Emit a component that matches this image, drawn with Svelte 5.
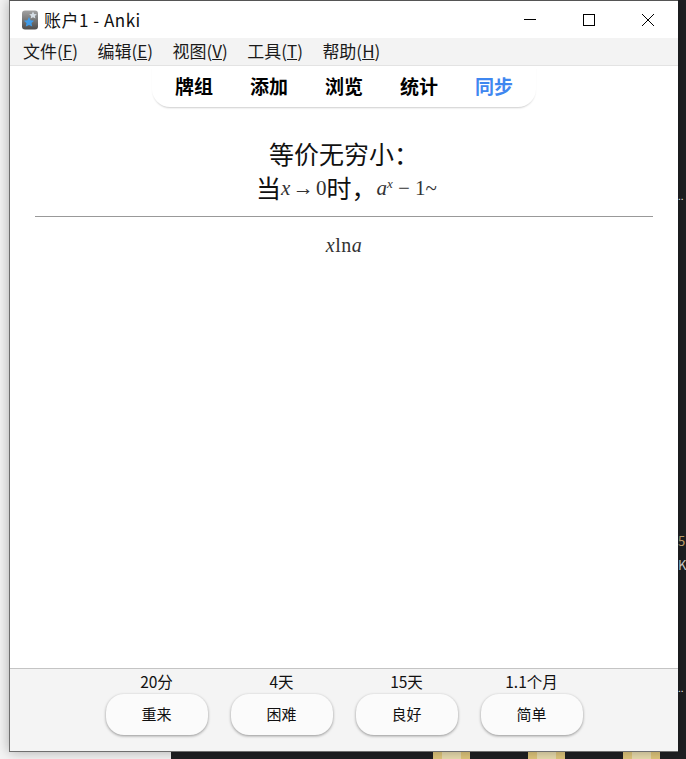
<script>
  const menus = [
    { label: '文件', key: 'F' },
    { label: '编辑', key: 'E' },
    { label: '视图', key: 'V' },
    { label: '工具', key: 'T' },
    { label: '帮助', key: 'H' }
  ];
  const tabs = ['牌组', '添加', '浏览', '统计', '同步'];
  const answers = [
    { time: '20分', label: '重来' },
    { time: '4天', label: '困难' },
    { time: '15天', label: '良好' },
    { time: '1.1个月', label: '简单' }
  ];
</script>

<div class="desktop">
  <div class="light"></div>

  <!-- bits of other windows peeking out on the right -->
  <span class="peek one">5</span>
  <span class="peek two">K</span>
  <span class="peek three">..</span>
  <span class="peek four">..</span>
  <div class="folders">
    <i></i><i></i><i></i>
  </div>

  <div class="window">
    <div class="titlebar">
      <svg class="app-icon" viewBox="0 0 16 20" width="16" height="20">
        <defs>
          <linearGradient id="icon-bg" x1="0" y1="0" x2="0" y2="1">
            <stop offset="0" stop-color="#a2a2a2" />
            <stop offset="1" stop-color="#4c4c4c" />
          </linearGradient>
        </defs>
        <rect x="0" y="0.5" width="16" height="19" rx="3" fill="url(#icon-bg)" />
        <path d="M11 1.500l1.200 2.400 2.600.3-1.900 1.800.5 2.600-2.400-1.300-2.300 1.300.4-2.600-1.900-1.800 2.600-.3z" fill="#d5dde4" />
        <path d="M7 7l1.600 3.300 3.500.4-2.600 2.400.7 3.500L7 14.900l-3.200 1.700.7-3.500-2.600-2.400 3.500-.4z" fill="#3f9be8" />
      </svg>
      <span class="title">账户1 - Anki</span>
      <div class="controls">
        <svg viewBox="0 0 12 12" width="12" height="12"><path d="M0 5.500h12" stroke="#000" fill="none" /></svg>
        <svg viewBox="0 0 12 12" width="12" height="12"><rect x="0.500" y="0.500" width="11" height="11" stroke="#000" fill="none" /></svg>
        <svg viewBox="0 0 12 12" width="12" height="12"><path d="M0 0l12 12M12 0L0 12" stroke="#000" fill="none" /></svg>
      </div>
    </div>

    <nav class="menubar">
      {#each menus as m}
        <span class="menu">{m.label}(<u>{m.key}</u>)</span>
      {/each}
    </nav>

    <div class="toolbar">
      <div class="tabs">
        {#each tabs as t, i}
          <span class="tab" class:active={i === 4}>{t}</span>
        {/each}
      </div>
    </div>

    <main class="card">
      <div class="question">
        <div>等价无穷小：</div>
        <div class="second">当<span class="math tight"><em>x</em> → 0</span>时，<span class="math"><em>a<sup>x</sup></em> − 1~</span></div>
      </div>
      <hr />
      <div class="answer math"><em>x</em>ln<em>a</em></div>
    </main>

    <footer class="bottom">
      {#each answers as a}
        <div class="answer-col">
          <span class="time">{a.time}</span>
          <button type="button">{a.label}</button>
        </div>
      {/each}
    </footer>
  </div>
</div>

<style>
  :global(body) {
    margin: 0;
    overflow: hidden;
  }

  :global(*) {
    box-sizing: border-box;
  }

  .desktop {
    position: relative;
    width: 686px;
    height: 759px;
    overflow: hidden;
    background: #1f2023;
    font-family: "Noto Sans CJK SC", "Open Sans", sans-serif;
    color: #000;
  }

  .light {
    position: absolute;
    left: 0;
    top: 0;
    width: 171px;
    height: 759px;
    background: #f4f4f4;
  }

  .peek {
    position: absolute;
    left: 678px;
    font-size: 13px;
    line-height: 16px;
    color: #d8d8d8;
  }

  .peek.one {
    top: 533px;
    color: #c9a873;
  }

  .peek.two {
    top: 557px;
  }

  .peek.three {
    top: 680px;
    font-size: 10px;
    color: #fff;
  }

  .peek.four {
    top: 188px;
    font-size: 10px;
    color: #fff;
  }

  .folders {
    position: absolute;
    left: 433px;
    top: 751px;
    display: flex;
    gap: 58px;
  }

  .folders i {
    display: block;
    width: 37px;
    height: 8px;
    background: linear-gradient(90deg, #e0c67c 0 25%, #e9dcae 25% 75%, #e0c67c 75%);
  }

  .window {
    position: absolute;
    left: 9px;
    top: 0;
    width: 669px;
    height: 752px;
    display: flex;
    flex-direction: column;
    background: #fff;
    border: 1px solid #6f6f6f;
    border-top: 1px solid #555;
    border-right: none;
    box-shadow: 0 0 12px rgba(0, 0, 0, 0.3);
  }

  .titlebar {
    flex: none;
    height: 37px;
    display: flex;
    align-items: center;
    padding-left: 12px;
    background: #fff;
  }

  .app-icon {
    flex: none;
  }

  .title {
    margin-left: 6px;
    font-size: 17px;
    line-height: 20px;
    letter-spacing: 0.5px;
    color: #111;
  }

  .controls {
    margin-left: auto;
    display: flex;
    gap: 47px;
    padding-right: 24px;
  }

  .menubar {
    flex: none;
    height: 28px;
    display: flex;
    gap: 19.500px;
    padding-left: 13px;
    padding-bottom: 2px;
    align-items: center;
    background: #f3f3f3;
    border-bottom: 1px solid #e3e3e3;
    font-size: 17px;
    line-height: 20px;
    color: #1a1a1a;
  }

  .toolbar {
    flex: none;
    display: flex;
    justify-content: center;
    background: #fff;
  }

  .tabs {
    width: 384px;
    height: 41px;
    display: flex;
    justify-content: center;
    gap: 37px;
    padding-top: 6px;
    border-radius: 0 0 18px 18px;
    box-shadow: 0 2px 2px -1px rgba(0, 0, 0, 0.2);
    font-size: 19px;
    line-height: 28px;
    font-weight: 700;
  }

  .tab.active {
    color: #3f87f0;
  }

  .card {
    flex: 1;
    padding: 30px 25px 0;
    text-align: center;
    font-size: 25px;
    line-height: 33px;
    color: #111;
  }

  .second {
    line-height: 34px;
    padding-left: 5px;
  }

  .math {
    font-family: "Liberation Serif", "DejaVu Serif", serif;
    font-size: 21px;
    color: #333;
    vertical-align: 3px;
  }

  .tight {
    word-spacing: -3px;
  }

  sup {
    font-size: 13px;
    line-height: 0;
    vertical-align: 7px;
  }

  hr {
    margin: 11px 0 0;
    border: none;
    border-top: 1px solid #999;
  }

  .answer {
    margin-top: 17px;
    font-size: 20px;
    line-height: 22px;
    letter-spacing: 0.5px;
    vertical-align: baseline;
  }

  .bottom {
    flex: none;
    height: 83px;
    display: flex;
    justify-content: center;
    gap: 23px;
    background: #f4f4f4;
    border-top: 1px solid #c4c4c4;
  }

  .answer-col {
    width: 102px;
    display: flex;
    flex-direction: column;
    align-items: center;
  }

  .time {
    height: 25px;
    font-size: 15.500px;
    line-height: 25px;
    color: #111;
  }

  button {
    width: 102px;
    height: 41px;
    padding: 0 0 2px;
    border: none;
    border-radius: 18px;
    background: #fbfbfb;
    box-shadow: 0 1px 3px rgba(0, 0, 0, 0.4);
    font-family: inherit;
    font-size: 15px;
    color: #111;
  }
</style>
